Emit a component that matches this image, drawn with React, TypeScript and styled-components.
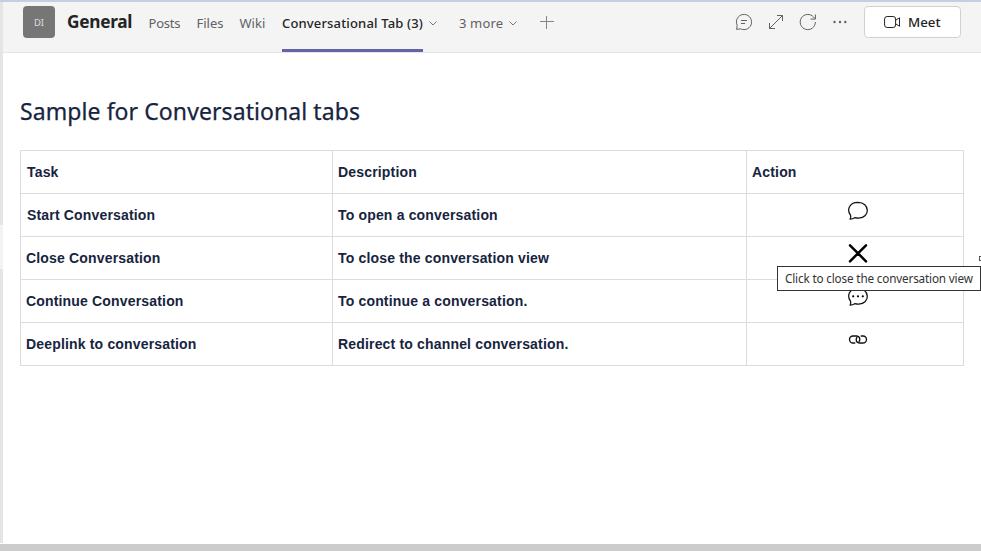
import React from "react";
import styled, { createGlobalStyle } from "styled-components";

const Global = createGlobalStyle`
  * { box-sizing: border-box; }
  html, body { margin: 0; padding: 0; overflow: hidden; background: #fff; }
  svg { display: block; flex: none; }
`;

const Page = styled.div`
  width: 981px;
  height: 551px;
  display: flex;
  flex-direction: column;
  background: #fff;
  font-family: "Noto Sans", "Segoe UI", sans-serif;
`;
const TopStrip = styled.div`
  height: 2px;
  flex: none;
  background: #c5cfe1;
`;
const Middle = styled.div`
  flex: 1;
  display: flex;
  min-height: 0;
`;
const Rail = styled.div`
  width: 3px;
  margin-bottom: 1px;
  flex: none;
  display: flex;
  flex-direction: column;
  background: #e5e5e5;
`;
const RailActive = styled.div`
  height: 44px;
  margin-top: 223px;
  background: #f3f3f3;
`;
const Panel = styled.div`
  flex: 1;
  min-width: 0;
  display: flex;
  flex-direction: column;
`;
const BottomBar = styled.div`
  height: 7px;
  flex: none;
  background: #ccc;
`;

const Header = styled.header`
  height: 51px;
  flex: none;
  display: flex;
  align-items: flex-start;
  padding: 4px 20px 0;
  background: #f4f4f4;
  border-bottom: 1px solid #e6e6e6;
`;
const Avatar = styled.div`
  width: 32px;
  height: 32px;
  border-radius: 4px;
  background: #767676;
  color: #dedede;
  font-size: 9.5px;
  line-height: 33px;
  text-align: center;
`;
const Channel = styled.h1`
  margin: 0 0 0 12px;
  width: 81.5px;
  font-size: 17.3px;
  line-height: 31px;
  font-weight: 700;
  letter-spacing: -0.3px;
  color: #242424;
  white-space: nowrap;
`;
const Tab = styled.div<{ $w: number; $active?: boolean; $ls?: number }>`
  width: ${(p) => p.$w}px;
  height: 46px;
  flex: none;
  white-space: nowrap;
  font-size: 13px;
  line-height: 35px;
  letter-spacing: ${(p) => p.$ls ?? 0}px;
  font-weight: ${(p) => (p.$active ? 500 : 400)};
  color: ${(p) => (p.$active ? "#242424" : "#616161")};
  border-bottom: 3px solid ${(p) => (p.$active ? "#6264a7" : "transparent")};
`;
const Slot = styled.div<{ $ml: number }>`
  height: 34px;
  margin-left: ${(p) => p.$ml}px;
  display: flex;
  align-items: center;
`;
const MoreTabs = styled.div`
  margin-left: 22px;
`;
const Tools = styled.div`
  margin-left: auto;
  height: 32px;
  display: flex;
  align-items: center;
  gap: 14px;
`;
const MeetButton = styled.button`
  width: 97px;
  height: 32px;
  margin-left: 1px;
  padding: 0 0 0 19px;
  display: flex;
  align-items: center;
  gap: 7px;
  border: 1px solid #d1d1d1;
  border-radius: 4px;
  background: #fff;
  color: #242424;
  font: 500 13.3px/30px "Noto Sans", sans-serif;
`;

const Content = styled.main`
  padding: 42px 17px 0;
`;
const Title = styled.h2`
  margin: 0 0 23px;
  height: 32px;
  font-size: 23px;
  line-height: 32px;
  font-weight: 400;
  letter-spacing: 0.08px;
  color: #172440;
  -webkit-text-stroke: 0.25px #172440;
  white-space: nowrap;
`;
const Table = styled.div`
  display: grid;
  grid-template-columns: 313px 414px 217px;
  grid-auto-rows: 43px;
  width: 944px;
  border-top: 1px solid #dcdcdc;
`;
const Cell = styled.div<{ $first?: boolean; $pad?: number }>`
  border-right: 1px solid #dcdcdc;
  border-bottom: 1px solid #dcdcdc;
  border-left: ${(p) => (p.$first ? "1px solid #dcdcdc" : "none")};
  padding-left: ${(p) => p.$pad ?? 5}px;
  font: 700 14px/42px "Liberation Sans", Arial, sans-serif;
  letter-spacing: 0.17px;
  color: #172440;
  white-space: nowrap;
`;
const ActionCell = styled(Cell)`
  padding: 6px 0 0 5px;
  display: flex;
  justify-content: center;
  position: relative;
`;
const Tooltip = styled.div`
  position: absolute;
  z-index: 2;
  left: 30px;
  top: 29px;
  width: 204px;
  height: 25px;
  padding-left: 7px;
  border: 1px solid #333;
  background: #fff;
  color: #333;
  font: 400 11.7px/23px "Noto Sans", sans-serif;
  letter-spacing: -0.15px;
`;
const CursorMark = styled.div`
  position: absolute;
  left: 232px;
  top: 19px;
  width: 5px;
  height: 5px;
  border: 1px solid #555;
`;

const Chevron = () => (
  <svg width="8" height="5" viewBox="0 0 8 5" fill="none" stroke="#777">
    <path d="M.5 .5 4 4 7.5 .5" />
  </svg>
);
const Plus = () => (
  <svg width="14" height="14" viewBox="0 0 14 14" fill="none" stroke="#858585">
    <path d="M0 5.5h14M6.5 -1v14" />
  </svg>
);
const ChatIcon = () => (
  <svg width="18" height="18" viewBox="0 0 18 18" fill="none" stroke="#616161">
    <path d="M1.6 16.4 2.2 12.4A7.6 7.6 0 1 1 5.6 15.8ZM6 7.5h6M6 10.5h4" strokeLinejoin="round" />
  </svg>
);
const ExpandIcon = () => (
  <svg width="18" height="18" viewBox="0 0 18 18" fill="none" stroke="#616161">
    <path d="M10 2.5h5.5V8M15.5 2.5 2.5 15.5M2.5 10v5.5H8" />
  </svg>
);
const RefreshIcon = () => (
  <svg width="18" height="18" viewBox="0 0 18 18" fill="none" stroke="#616161">
    <path d="M16.4 9A7.6 7.6 0 1 1 14.5 4L16 5.5M16.4 1.5v4.6h-4.9" />
  </svg>
);
const MoreIcon = () => (
  <svg width="18" height="18" viewBox="0 0 18 18" fill="#616161">
    <circle cx="3.5" cy="9" r="1.2" />
    <circle cx="9" cy="9" r="1.2" />
    <circle cx="14.3" cy="9" r="1.2" />
  </svg>
);
const CameraIcon = () => (
  <svg width="17" height="14" viewBox="0 0 17 14" fill="none" stroke="#242424" strokeLinejoin="round">
    <rect x=".6" y="1.5" width="11" height="11" rx="2.5" />
    <path d="M11.6 5.2 15.5 2.8v8.4l-3.9-2.4" />
  </svg>
);
const BubbleIcon = ({ dots }: { dots?: boolean }) => (
  <svg width="22" height="22" viewBox="0 0 22 22" fill="none" stroke="#111" strokeWidth="1.25">
    <path
      d="M3.1 19.2C3.8 17.7 4 16.3 3.4 15 0 10.6 1.5 2.4 11 2.3c12 .2 12.5 15.4.7 15.9-1.6.1-2.8-.2-4-.5-1.4.9-2.8 1.3-4.6 1.5Z"
      strokeLinejoin="round"
    />
    {dots && (
      <g fill="#000" stroke="none">
        <circle cx="6.2" cy="10.3" r="1.1" />
        <circle cx="11" cy="10.3" r="1.1" />
        <circle cx="15.8" cy="10.3" r="1.1" />
      </g>
    )}
  </svg>
);
const CloseIcon = () => (
  <svg width="22" height="22" viewBox="0 0 22 22" fill="none" stroke="#000" strokeWidth="2.5">
    <path d="M3 2.3 19 18.3M19 2.3 3 18.3" strokeLinecap="round" />
  </svg>
);
const LinkIcon = () => (
  <svg width="22" height="22" viewBox="0 0 22 22" fill="none" stroke="#111" strokeWidth="1.35" strokeLinecap="round">
    <path d="M7.8 14H6a3.5 3.5 0 0 1 0-7h3.6a3.5 3.5 0 0 1 3.2 3.5c0 .8-.3 1.5-.7 2" />
    <path d="M14.2 7H16a3.5 3.5 0 0 1 0 7h-3.6a3.5 3.5 0 0 1-3.2-3.5c0-.8.3-1.5.7-2" />
  </svg>
);

const rows = [
  { task: "Start Conversation", pad: 6, text: "To open a conversation", icon: <BubbleIcon /> },
  {
    task: "Close Conversation",
    pad: 5,
    text: "To close the conversation view",
    icon: <CloseIcon />,
    tip: "Click to close the conversation view",
  },
  { task: "Continue Conversation", pad: 5, text: "To continue a conversation.", icon: <BubbleIcon dots /> },
  { task: "Deeplink to conversation", pad: 5, text: "Redirect to channel conversation.", icon: <LinkIcon /> },
];

export default function App() {
  return (
    <Page>
      <Global />
      <TopStrip />
      <Middle>
        <Rail>
          <RailActive />
        </Rail>
        <Panel>
          <Header>
            <Avatar>DI</Avatar>
            <Channel>General</Channel>
            <Tab $w={48} $ls={-0.2}>Posts</Tab>
            <Tab $w={43}>Files</Tab>
            <Tab $w={42.5}>Wiki</Tab>
            <Tab $w={141} $active $ls={0.16}>
              Conversational Tab (3)
            </Tab>
            <Slot $ml={6}>
              <Chevron />
            </Slot>
            <MoreTabs>
              <Tab $w={45} $ls={0.15}>3 more</Tab>
            </MoreTabs>
            <Slot $ml={5}>
              <Chevron />
            </Slot>
            <Slot $ml={23}>
              <Plus />
            </Slot>
            <Tools>
              <ChatIcon />
              <ExpandIcon />
              <RefreshIcon />
              <MoreIcon />
              <MeetButton>
                <CameraIcon />
                Meet
              </MeetButton>
            </Tools>
          </Header>
          <Content>
            <Title>Sample for Conversational tabs</Title>
            <Table>
              <Cell $first $pad={6}>Task</Cell>
              <Cell>Description</Cell>
              <Cell>Action</Cell>
              {rows.map((row) => (
                <React.Fragment key={row.task}>
                  <Cell $first $pad={row.pad}>{row.task}</Cell>
                  <Cell>{row.text}</Cell>
                  <ActionCell>
                    {row.icon}
                    {row.tip && <Tooltip role="tooltip">{row.tip}</Tooltip>}
                    {row.tip && <CursorMark />}
                  </ActionCell>
                </React.Fragment>
              ))}
            </Table>
          </Content>
        </Panel>
      </Middle>
      <BottomBar />
    </Page>
  );
}
